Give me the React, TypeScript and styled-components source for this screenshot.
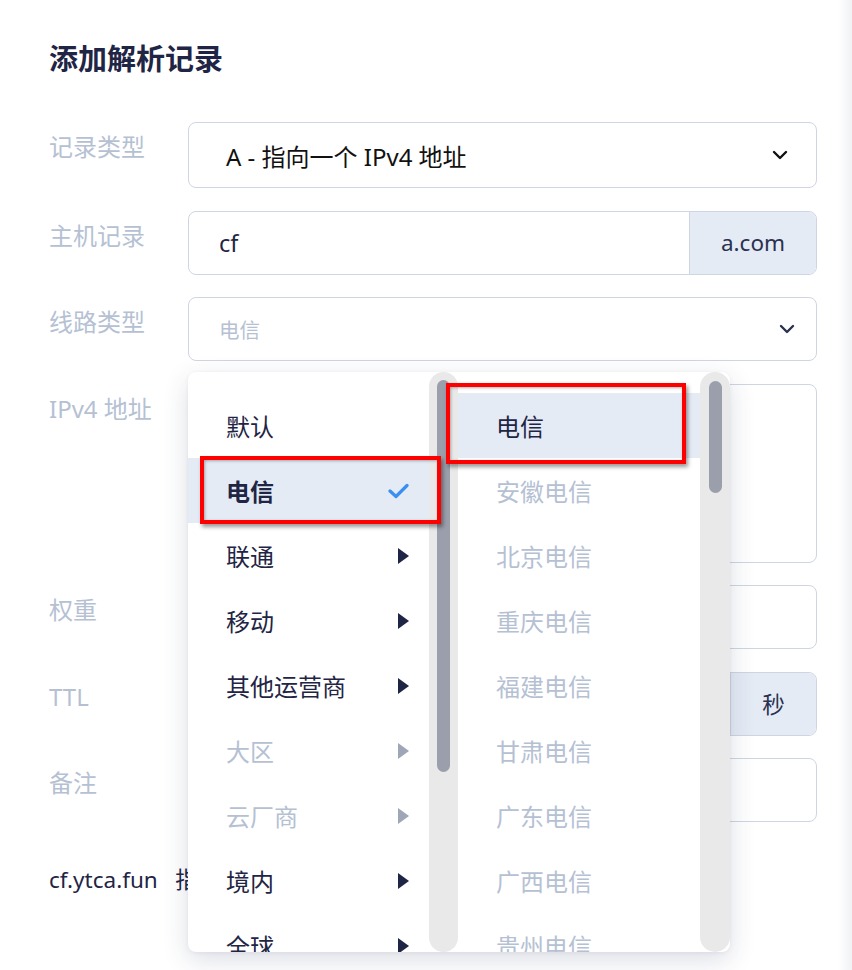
import React from "react";
import styled, { createGlobalStyle } from "styled-components";

const GlobalStyle = createGlobalStyle`
  html, body {
    margin: 0;
    padding: 0;
    background: #ffffff;
  }
  body {
    font-family: "Noto Sans", "Noto Sans CJK SC", sans-serif;
    color: #1f2544;
  }
`;

const Page = styled.div`
  display: flex;
  min-height: 970px;
  overflow: hidden;
`;

const Main = styled.div`
  width: 838px;
  box-sizing: border-box;
  padding: 40px 21px 0 49px;
`;

const SideShade = styled.div`
  flex: 1;
  background: linear-gradient(90deg, #ffffff 0%, #f1f2f5 100%);
`;

const Title = styled.h1`
  margin: 0 0 48px;
  font-size: 29px;
  line-height: 34px;
  font-weight: 700;
  color: #1f2544;
  font-family: "Noto Sans CJK SC", sans-serif;
`;

const Form = styled.div`
  display: flex;
  flex-direction: column;
  gap: 22.5px;
`;

const Row = styled.div`
  display: flex;
  align-items: flex-start;
`;

const Label = styled.div`
  width: 139px;
  flex-shrink: 0;
  padding-top: 7px;
  font-size: 24px;
  line-height: 36px;
  color: #b5c1d3;
  font-family: "Noto Sans", "Noto Sans CJK SC", sans-serif;
`;

const Field = styled.div`
  position: relative;
  flex: 1;
`;

const Box = styled.div<{ $h: number }>`
  box-sizing: border-box;
  height: ${(p) => p.$h}px;
  border: 1px solid #cfd5e2;
  border-radius: 8px;
  background: #ffffff;
  display: flex;
  align-items: center;
  overflow: hidden;
`;

const SelectText = styled.span<{ $placeholder?: boolean }>`
  flex: 1;
  padding-left: ${(p) => (p.$placeholder ? 30 : 37)}px;
  font-size: ${(p) => (p.$placeholder ? 20.5 : 24)}px;
  color: ${(p) => (p.$placeholder ? "#b5c1d3" : "#111111")};
  font-family: "Noto Sans", "Noto Sans CJK SC", sans-serif;
`;

const Chevron = styled.svg<{ $right: number }>`
  margin-right: ${(p) => p.$right}px;
  flex-shrink: 0;
`;

const InputText = styled.span`
  flex: 1;
  padding-left: 30px;
  font-size: 23.5px;
  color: #1f2544;
`;

const Addon = styled.div<{ $w: number }>`
  width: ${(p) => p.$w}px;
  height: 100%;
  flex-shrink: 0;
  background: #e5ebf5;
  border-left: 1px solid #cfd5e2;
  display: flex;
  align-items: center;
  justify-content: center;
  font-size: 22.5px;
  color: #2b3150;
  font-family: "Noto Sans", "Noto Sans CJK SC", sans-serif;
`;

const Summary = styled.div`
  margin-top: 40px;
  font-size: 22.5px;
  line-height: 36px;
  color: #1f2544;
  white-space: pre;
`;

const Dropdown = styled.div`
  position: absolute;
  top: 75px;
  left: 0;
  width: 542px;
  height: 580px;
  background: #ffffff;
  border-radius: 8px;
  box-shadow: 0 8px 26px rgba(40, 52, 96, 0.16), 0 1px 4px rgba(40, 52, 96, 0.06);
  display: flex;
  overflow: hidden;
  z-index: 5;
`;

const Column = styled.div<{ $w: number }>`
  width: ${(p) => p.$w}px;
  display: flex;
  height: 100%;
`;

const List = styled.div`
  flex: 1;
  padding-top: 21px;
  overflow: hidden;
`;

const Item = styled.div<{ $active?: boolean; $muted?: boolean; $bold?: boolean }>`
  height: 65px;
  box-sizing: border-box;
  padding: 0 20px 0 38px;
  display: flex;
  align-items: center;
  justify-content: space-between;
  background: ${(p) => (p.$active ? "#e5ebf5" : "transparent")};
  color: ${(p) => (p.$muted ? "#b5c1d3" : "#1f2544")};
  font-size: 24px;
  line-height: 34px;
  font-weight: ${(p) => (p.$bold ? 700 : 400)};
  font-family: "Noto Sans CJK SC", sans-serif;
  white-space: nowrap;
`;

const Track = styled.div<{ $w: number }>`
  width: ${(p) => p.$w}px;
  flex-shrink: 0;
  height: 100%;
  background: #e9e9ea;
  border-radius: 15px;
  display: flex;
  justify-content: center;
`;

const Thumb = styled.div`
  width: 13px;
  background: #9b9fab;
  border-radius: 7px;
`;

const Mark = styled.div`
  position: absolute;
  box-sizing: border-box;
  border: 4.5px solid #ff0000;
  box-shadow: 2px 3px 4px rgba(0, 0, 0, 0.4), inset 1px 1px 3px rgba(0, 0, 0, 0.3);
  pointer-events: none;
`;

const Arrow = ({ muted }: { muted?: boolean }) => (
  <svg width="11" height="16" viewBox="0 0 11 16">
    <path d="M0 0 L11 8 L0 16 Z" fill={muted ? "#9ea6b8" : "#1f2544"} />
  </svg>
);

const Check = () => (
  <svg width="21" height="16" viewBox="0 0 21 16">
    <path
      d="M2 8 L8 13.5 L19 2.5"
      fill="none"
      stroke="#3a8ff0"
      strokeWidth="3.2"
      strokeLinecap="round"
      strokeLinejoin="round"
    />
  </svg>
);

const carriers = [
  { name: "默认" },
  { name: "电信", selected: true },
  { name: "联通", sub: true },
  { name: "移动", sub: true },
  { name: "其他运营商", sub: true },
  { name: "大区", sub: true, muted: true },
  { name: "云厂商", sub: true, muted: true },
  { name: "境内", sub: true },
  { name: "全球", sub: true },
];

const regions = [
  "电信",
  "安徽电信",
  "北京电信",
  "重庆电信",
  "福建电信",
  "甘肃电信",
  "广东电信",
  "广西电信",
  "贵州电信",
];

export default function App() {
  return (
    <>
      <GlobalStyle />
      <Page>
        <Main>
          <Title>添加解析记录</Title>
          <Form>
            <Row>
              <Label>记录类型</Label>
              <Field>
                <Box $h={66}>
                  <SelectText>A - 指向一个 IPv4 地址</SelectText>
                  <Chevron $right={28} width="16" height="10" viewBox="0 0 16 10">
                    <path d="M2 2 L8 8 L14 2" fill="none" stroke="#111" strokeWidth="2.4" strokeLinecap="round" strokeLinejoin="round" />
                  </Chevron>
                </Box>
              </Field>
            </Row>
            <Row>
              <Label>主机记录</Label>
              <Field>
                <Box $h={64}>
                  <InputText>cf</InputText>
                  <Addon $w={126}>a.com</Addon>
                </Box>
              </Field>
            </Row>
            <Row>
              <Label>线路类型</Label>
              <Field>
                <Box $h={64}>
                  <SelectText $placeholder>电信</SelectText>
                  <Chevron $right={21} width="16" height="10" viewBox="0 0 16 10">
                    <path d="M2 2 L8 8 L14 2" fill="none" stroke="#2b3150" strokeWidth="2.4" strokeLinecap="round" strokeLinejoin="round" />
                  </Chevron>
                </Box>
                <Dropdown>
                  <Column $w={270}>
                    <List>
                      {carriers.map((c) => (
                        <Item key={c.name} $active={c.selected} $bold={c.selected} $muted={c.muted}>
                          <span>{c.name}</span>
                          {c.selected && <Check />}
                          {c.sub && <Arrow muted={c.muted} />}
                        </Item>
                      ))}
                    </List>
                    <Track $w={29}>
                      <Thumb style={{ marginTop: 8, height: 392 }} />
                    </Track>
                  </Column>
                  <Column $w={272}>
                    <List>
                      {regions.map((r, i) => (
                        <Item key={r} $active={i === 0} $muted={i !== 0}>
                          <span>{r}</span>
                        </Item>
                      ))}
                    </List>
                    <Track $w={30}>
                      <Thumb style={{ marginTop: 9, height: 112 }} />
                    </Track>
                  </Column>
                  <Mark style={{ left: 12, top: 84, width: 241, height: 68 }} />
                  <Mark style={{ left: 258, top: 11, width: 240, height: 81 }} />
                </Dropdown>
              </Field>
            </Row>
            <Row>
              <Label>IPv4 地址</Label>
              <Field>
                <Box $h={179} />
              </Field>
            </Row>
            <Row>
              <Label>权重</Label>
              <Field>
                <Box $h={64} />
              </Field>
            </Row>
            <Row>
              <Label>TTL</Label>
              <Field>
                <Box $h={64}>
                  <InputText />
                  <Addon $w={85}>秒</Addon>
                </Box>
              </Field>
            </Row>
            <Row>
              <Label>备注</Label>
              <Field>
                <Box $h={64} />
              </Field>
            </Row>
          </Form>
          <Summary>{"cf.ytca.fun   指向 IPv4 地址"}</Summary>
        </Main>
        <SideShade />
      </Page>
    </>
  );
}
